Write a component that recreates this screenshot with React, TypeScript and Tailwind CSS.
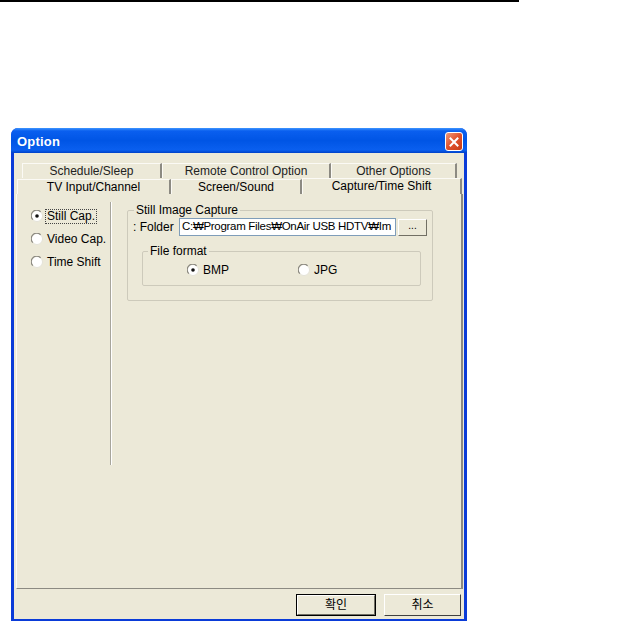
import React from 'react';

const font = { fontFamily: '"Liberation Sans", "Noto Sans CJK KR", sans-serif' };

// classic sunken radio
const Radio = ({ checked }: { checked?: boolean }) => (
  <svg width="12" height="12" viewBox="0 0 12 12" className="shrink-0">
    <circle cx="6" cy="6" r="5.5" fill="#fff" stroke="#e4e2d8" />
    <path d="M1.8 9.6 A5.2 5.2 0 0 1 9.6 1.8" stroke="#8a887f" strokeWidth="1.2" fill="none" />
    {checked && <circle cx="6" cy="6" r="1.8" fill="#111" />}
  </svg>
);

const Tab = ({ label, w }: { label: string; w: string }) => (
  <div className={`${w} h-[15px] flex items-center justify-center border-t border-l border-t-[#fbfaf5] border-l-[#fbfaf5] border-r-2 border-r-[#8c8a82] bg-[#ECE9D8] leading-none`}>
    {label}
  </div>
);

const App: React.FC = () => {
  return (
    <div className="w-[627px] h-[621px] bg-white overflow-hidden text-[12px] text-black" style={font}>
      <div className="h-[2px] w-[519px] bg-black" />

      {/* window */}
      <div className="ml-[11px] mt-[126px] w-[456px] h-[493px] flex flex-col bg-[#0a3bd8] rounded-t-[7px] overflow-hidden">
        {/* title bar */}
        <div className="h-[25px] shrink-0 flex items-center justify-between pl-[6px] pr-[4px] pt-[2px] bg-[linear-gradient(to_bottom,#3d95ff_0%,#0a5fef_12%,#0055e5_50%,#0a5fef_88%,#0041c8_100%)]">
          <span className="text-white font-bold text-[13px] tracking-[0.2px]">Option</span>
          <div className="w-[18px] h-[19px] rounded-[3px] border border-white bg-[linear-gradient(135deg,#f09a7c,#e0502b_50%,#c73d16)] flex items-center justify-center">
            <svg width="10" height="10" viewBox="0 0 10 10">
              <path d="M1.5 1.5 L8.5 8.5 M8.5 1.5 L1.5 8.5" stroke="#fff" strokeWidth="2" strokeLinecap="square" />
            </svg>
          </div>
        </div>

        {/* client */}
        <div className="flex-1 mx-[3px] mb-[2px] bg-[#ECE9D8] flex flex-col pt-[10px]">
          {/* tabs */}
          <div className="flex ml-[8px] text-[#222]">
            <Tab label="Schedule/Sleep" w="w-[140px]" />
            <Tab label="Remote Control Option" w="w-[169px]" />
            <Tab label="Other Options" w="w-[126px]" />
          </div>
          <div className="flex ml-[3px] items-end">
            <Tab label="TV Input/Channel" w="w-[154px]" />
            <Tab label="Screen/Sound" w="w-[131px]" />
            <div className="w-[160px] h-[16px] flex items-start justify-center border-t border-l border-t-[#fbfaf5] border-l-[#fbfaf5] border-r-2 border-r-[#8c8a82] bg-[#ECE9D8] leading-none pt-[1px]">
              Capture/Time Shift
            </div>
          </div>

          {/* panel */}
          <div className="ml-[2px] w-[447px] h-[395px] shrink-0 flex border-l border-b border-r-2 border-l-[#fbfaf5] border-b-[#8c8a82] border-r-[#8c8a82] bg-[#ECE9D8]">
            {/* left nav */}
            <div className="w-[93px] flex flex-col gap-[11px] pt-[16px] pl-[14px]">
              <div className="flex items-center gap-[3px] h-[12px]">
                <Radio checked />
                <span className="outline-1 outline-dotted outline-[#444] px-[1px] leading-[13px]">Still Cap.</span>
              </div>
              <div className="flex items-center gap-[4px] h-[12px]">
                <Radio />
                <span>Video Cap.</span>
              </div>
              <div className="flex items-center gap-[4px] h-[12px]">
                <Radio />
                <span>Time Shift</span>
              </div>
            </div>

            <div className="w-[2px] mt-[8px] h-[263px] border-l border-r border-l-[#a7a59b] border-r-white" />

            {/* right content */}
            <div className="pl-[15px] pt-[9px]">
              <fieldset className="w-[304px] h-[98px] border border-[#cdcabb] rounded-[2px] px-[5px]">
                <legend className="px-[2px] ml-[1px] leading-[14px]">Still Image Capture</legend>
                <div className="flex items-center mt-[1px]">
                  <span className="w-[46px] shrink-0">: Folder</span>
                  <div className="w-[217px] h-[18px] shrink-0 bg-white border border-[#7f9db9] flex items-center pl-[2px] overflow-hidden whitespace-nowrap">
                    <span className="tracking-[-0.3px] text-[11.5px]">C:₩Program Files₩OnAir USB HDTV₩Im</span>
                  </div>
                  <div className="ml-[2px] w-[29px] h-[17px] shrink-0 flex items-center justify-center border border-t-white border-l-white border-r-[#716f64] border-b-[#716f64] bg-[#ECE9D8] text-[10px] leading-none pb-[3px]">
                    ...
                  </div>
                </div>
                <fieldset className="mt-[8px] ml-[9px] w-[279px] h-[42px] border border-[#cdcabb] rounded-[2px]">
                  <legend className="px-[2px] ml-[5px] leading-[14px]">File format</legend>
                  <div className="flex items-center pt-[3px]">
                    <div className="ml-[44px] flex items-center gap-[4px] w-[111px]">
                      <Radio checked />
                      <span>BMP</span>
                    </div>
                    <div className="flex items-center gap-[4px]">
                      <Radio />
                      <span>JPG</span>
                    </div>
                  </div>
                </fieldset>
              </fieldset>
            </div>
          </div>

          {/* buttons */}
          <div className="flex justify-end gap-[8px] pr-[3px] mt-[5px]">
            <div className="w-[80px] h-[22px] border border-black flex">
              <div className="flex-1 flex items-center justify-center border border-t-white border-l-white border-r-[#716f64] border-b-[#716f64] bg-[#ECE9D8]">
                확인
              </div>
            </div>
            <div className="w-[77px] h-[22px] flex items-center justify-center border border-t-white border-l-white border-r-[#404040] border-b-[#404040] bg-[#ECE9D8]">
              취소
            </div>
          </div>
        </div>
      </div>
    </div>
  );
};

export default App;
